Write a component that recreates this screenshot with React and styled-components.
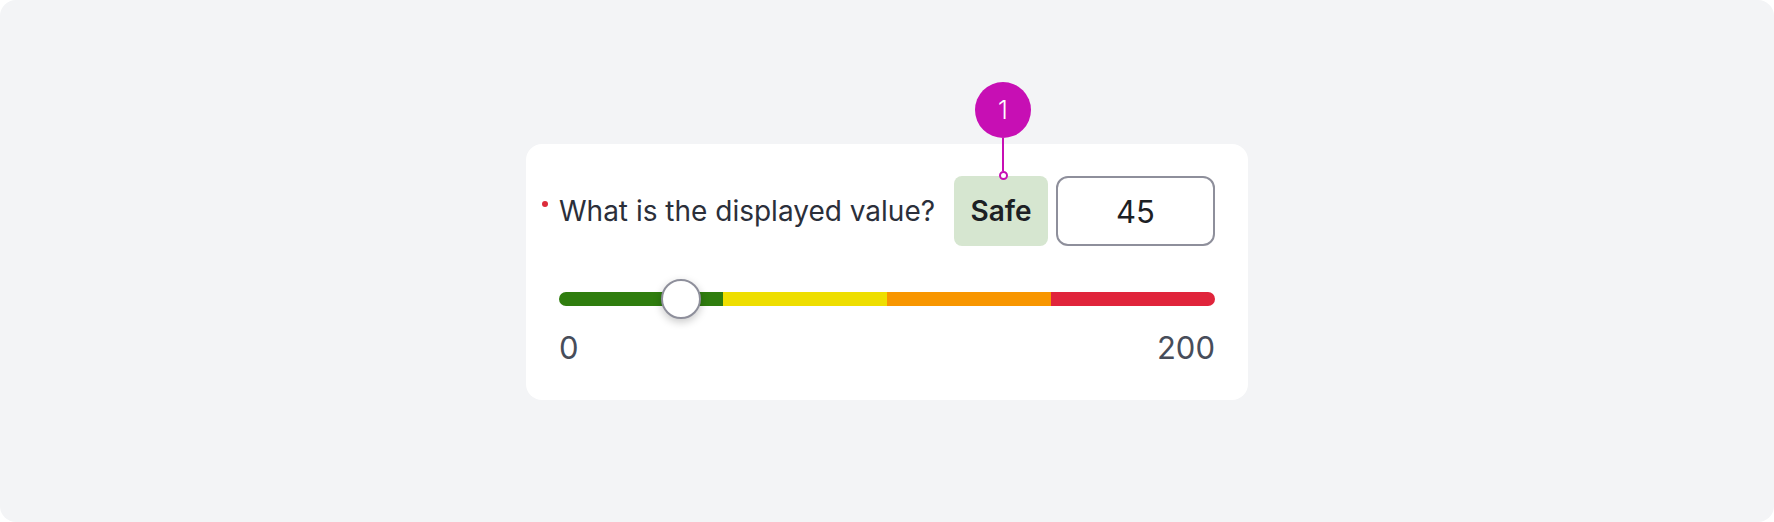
import React from "react";
import styled, { createGlobalStyle } from "styled-components";

const GlobalStyle = createGlobalStyle`
  html, body {
    margin: 0;
    padding: 0;
    background: #ffffff;
    font-family: Inter, "Noto Sans", "Liberation Sans", sans-serif;
  }
`;

const Page = styled.div`
  width: 1774px;
  height: 522px;
  box-sizing: border-box;
  background: #f3f4f6;
  border-radius: 16px;
  display: flex;
  justify-content: center;
  padding-top: 144px;
`;

const Card = styled.div`
  width: 722px;
  height: 256px;
  box-sizing: border-box;
  background: #ffffff;
  border-radius: 16px;
  padding: 32px 33px 0 33px;
  display: flex;
  flex-direction: column;
`;

const Row = styled.div`
  display: flex;
  align-items: center;
  height: 70px;
`;

const Label = styled.div`
  position: relative;
  flex: 1;
  font-size: 28px;
  color: #2b2f3a;

  &::before {
    content: "";
    position: absolute;
    left: -17px;
    top: 7px;
    width: 6px;
    height: 6px;
    border-radius: 50%;
    background: #dc2b3a;
  }
`;

const Badge = styled.div`
  position: relative;
  width: 94px;
  height: 70px;
  border-radius: 8px;
  background: #d6e6d0;
  color: #1c2024;
  font-size: 28px;
  font-weight: 600;
  display: flex;
  align-items: center;
  justify-content: center;
`;

const Marker = styled.div`
  position: absolute;
  bottom: 100%;
  left: calc(50% + 2px);
  transform: translateX(-50%);
  margin-bottom: -4px;
  display: flex;
  flex-direction: column;
  align-items: center;
`;

const MarkerDot = styled.div`
  width: 56px;
  height: 56px;
  border-radius: 50%;
  background: #c70fb4;
  color: #ffffff;
  font-size: 25px;
  font-weight: 300;
  display: flex;
  align-items: center;
  justify-content: center;
`;

const MarkerLine = styled.div`
  width: 2px;
  height: 33px;
  background: #c70fb4;
`;

const MarkerEnd = styled.div`
  width: 5px;
  height: 5px;
  border-radius: 50%;
  border: 2px solid #c70fb4;
  background: #ffffff;
`;

const ValueBox = styled.div`
  margin-left: 8px;
  width: 159px;
  height: 70px;
  box-sizing: border-box;
  border: 2px solid #8e8f9b;
  border-radius: 12px;
  font-size: 31px;
  color: #1c2024;
  display: flex;
  align-items: center;
  justify-content: center;
`;

const Slider = styled.div`
  position: relative;
  margin-top: 33px;
  height: 40px;
  display: flex;
  align-items: center;
`;

const Track = styled.div`
  flex: 1;
  height: 14px;
  border-radius: 7px;
  overflow: hidden;
  display: flex;
`;

const Segment = styled.div`
  flex: 1;
  background: ${(p) => p.$color};
`;

const Thumb = styled.div`
  position: absolute;
  top: 0;
  width: 40px;
  height: 40px;
  box-sizing: border-box;
  border-radius: 50%;
  background: #ffffff;
  border: 2px solid #8e8f9b;
  box-shadow: 0 3px 8px rgba(0, 0, 0, 0.22);
  transform: translateX(-50%);
`;

const Scale = styled.div`
  margin-top: 10px;
  display: flex;
  justify-content: space-between;
  font-size: 31px;
  color: #474d5a;
`;

const segments = ["#2f7d0e", "#eede00", "#f89600", "#e0243b"];

export default function App() {
  const value = 45;
  const max = 200;

  return (
    <>
      <GlobalStyle />
      <Page>
        <Card>
          <Row>
            <Label>What is the displayed value?</Label>
            <Badge>
              Safe
              <Marker>
                <MarkerDot>1</MarkerDot>
                <MarkerLine />
                <MarkerEnd />
              </Marker>
            </Badge>
            <ValueBox>{value}</ValueBox>
          </Row>
          <Slider>
            <Track>
              {segments.map((c) => (
                <Segment key={c} $color={c} />
              ))}
            </Track>
            <Thumb style={{ left: `calc(${(value / max) * 100}% - 26px)` }} />
          </Slider>
          <Scale>
            <span>0</span>
            <span>{max}</span>
          </Scale>
        </Card>
      </Page>
    </>
  );
}
